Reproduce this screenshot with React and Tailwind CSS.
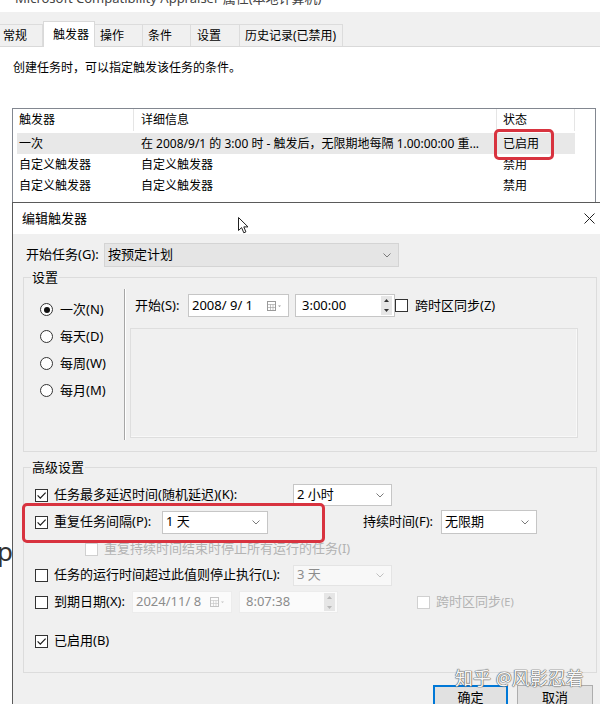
import React from "react";

const FONT = "font-['Noto_Sans','Noto_Sans_CJK_SC',sans-serif]";

const TABS = [
    { label: '常规', w: 'w-[43px]', pl: 'pl-[3px]' },
    { label: '触发器', w: 'w-[52px]', pl: 'pl-[9px]', active: true },
    { label: '操作', w: 'w-[48px]', pl: 'pl-[5px]' },
    { label: '条件', w: 'w-[48px]', pl: 'pl-[5px]' },
    { label: '设置', w: 'w-[49px]', pl: 'pl-[6px]' },
    { label: '历史记录(已禁用)', w: 'w-[103px]', pl: 'pl-[5px]' },
];

const ROWS = [
    { name: '一次', detail: '在 2008/9/1 的 3:00 时 - 触发后，无限期地每隔 1.00:00:00 重...', status: '已启用', selected: true },
    { name: '自定义触发器', detail: '自定义触发器', status: '禁用' },
    { name: '自定义触发器', detail: '自定义触发器', status: '禁用' },
];

function Check({ checked = false, disabled = false }) {
    return (
        <span className={`flex h-[13px] w-[13px] shrink-0 items-center justify-center border bg-white ${disabled ? 'border-[#d0d0d0]' : 'border-[#333333]'}`}>
            {checked && (
                <svg width="11" height="11" viewBox="0 0 11 11">
                    <path d="M1.6 5.4 L4.3 8.1 L9.6 2.6" fill="none" stroke="#1a1a1a" strokeWidth="1.2" />
                </svg>
            )}
        </span>
    );
}

function Radio({ checked = false }) {
    return (
        <span className="flex h-[13px] w-[13px] shrink-0 items-center justify-center rounded-full border border-[#333333] bg-white">
            {checked && <span className="h-[6px] w-[6px] rounded-full bg-[#111111]" />}
        </span>
    );
}

function Chevron({ color = '#7a7a7a' }) {
    return (
        <svg width="8" height="5" viewBox="0 0 8 5" className="shrink-0">
            <path d="M0.5 0.5 L4 4 L7.5 0.5" fill="none" stroke={color} strokeWidth="1" />
        </svg>
    );
}

function Select({ text, className = '', disabled = false, gray = false }) {
    const look = gray
        ? 'border-[#d4d4d4] bg-[#e5e5e5]'
        : disabled
            ? 'border-[#e4e4e4] bg-[#f8f8f8] text-[#8c8c8c]'
            : 'border-[#c6c6c6] bg-white';
    return (
        <div className={`flex shrink-0 items-center justify-between border pl-[3px] pr-[7px] ${look} ${className}`}>
            <span>{text}</span>
            <Chevron color={disabled ? '#c0c0c0' : '#7a7a7a'} />
        </div>
    );
}

function CalendarIcon({ disabled }) {
    const c = disabled ? '#c4c4c4' : '#9a9a9a';
    return (
        <svg width="15" height="10" viewBox="0 0 15 10" className="shrink-0">
            <rect x="0.5" y="0.5" width="8" height="9" fill="none" stroke={c} />
            <path d="M0.5 3.5 H8.5 M0.5 6.5 H8.5 M3.5 3.5 V9.5 M6 3.5 V9.5" stroke={c} strokeWidth="0.6" />
            <path d="M11 4.5 H14 L12.5 6 Z" fill={c} />
        </svg>
    );
}

function Spinner({ disabled }) {
    const c = disabled ? '#b8b8b8' : '#333333';
    return (
        <div className="flex h-full w-[11px] flex-col justify-center gap-[2px] bg-[#e6e6e6]">
            <div className="flex flex-1 items-center justify-center">
                <svg width="5" height="3" viewBox="0 0 5 3"><path d="M0 3 L2.5 0 L5 3 Z" fill={c} /></svg>
            </div>
            <div className="flex flex-1 items-center justify-center">
                <svg width="5" height="3" viewBox="0 0 5 3"><path d="M0 0 L2.5 3 L5 0 Z" fill={c} /></svg>
            </div>
        </div>
    );
}

function DateBox({ text, className = '', disabled = false }) {
    return (
        <div className={`flex shrink-0 items-center justify-between border pl-[3px] pr-[6px] ${disabled ? 'border-[#ececec] bg-[#fbfbfb] text-[#8c8c8c]' : 'border-[#c6c6c6] bg-white'} ${className}`}>
            <span>{text}</span>
            <CalendarIcon disabled={disabled} />
        </div>
    );
}

function TimeBox({ text, className = '', disabled = false }) {
    return (
        <div className={`flex shrink-0 items-center justify-between border py-[1px] pl-[6px] pr-[2px] ${disabled ? 'border-[#ececec] bg-[#fbfbfb] text-[#8c8c8c]' : 'border-[#c6c6c6] bg-white'} ${className}`}>
            <span>{text}</span>
            <Spinner disabled={disabled} />
        </div>
    );
}

function CheckRow({ checked, label, labelW, className = '', children }) {
    return (
        <div className={`flex items-center pl-[11px] ${className}`}>
            <Check checked={checked} />
            <span className={`ml-[6px] shrink-0 whitespace-nowrap ${labelW || ''}`}>{label}</span>
            {children}
        </div>
    );
}

export default function App() {
    return (
        <div className={`relative h-[704px] w-[600px] overflow-hidden bg-white text-black ${FONT}`}>
            {/* Properties window behind */}
            <div className="flex flex-col">
                <div className="h-[12px] overflow-hidden bg-white">
                    <div className="-mt-[10px] whitespace-nowrap pl-[15px] text-[13px] leading-[16px] text-[#444444]">
                        Microsoft Compatibility Appraiser 属性(本地计算机)
                    </div>
                </div>

                <div className="flex h-[35px] items-end border-b border-[#d9d9d9] bg-[#f0f0f0] text-[12px]">
                    {TABS.map((t) => (
                        <div
                            key={t.label}
                            className={`flex shrink-0 items-center whitespace-nowrap ${t.w} ${t.pl} ${t.active
                                ? '-mb-px h-[26px] border-x border-t border-[#d9d9d9] bg-white'
                                : 'h-[22px] border-t border-r border-[#dcdcdc]'
                                }`}
                        >
                            {t.label}
                        </div>
                    ))}
                </div>

                <div className="mt-[13px] pl-[13px] text-[12px] leading-[16px]">创建任务时，可以指定触发该任务的条件。</div>

                <div className="ml-[12px] mt-[32px] h-[95px] w-[584px] border border-[#828790] text-[12px]">
                    <div className="ml-[4px] flex h-[22px] items-center">
                        <div className="flex h-full w-[117px] items-center border-r border-[#e5e5e5] pl-[2px]">触发器</div>
                        <div className="flex h-full w-[363px] items-center border-r border-[#e5e5e5] pl-[7px]">详细信息</div>
                        <div className="flex h-full w-[78px] items-center border-r border-[#e5e5e5] pl-[6px]">状态</div>
                    </div>
                    <div className="mt-[2px] flex flex-col">
                        {ROWS.map((r, i) => (
                            <div key={i} className={`ml-[4px] flex h-[21px] w-[558px] items-center ${r.selected ? 'bg-[#e8e8e8]' : ''}`}>
                                <div className="w-[117px] pl-[2px]">{r.name}</div>
                                <div className="w-[363px] whitespace-nowrap pl-[7px]">{r.detail}</div>
                                <div className="w-[78px] pl-[6px]">{r.status}</div>
                            </div>
                        ))}
                    </div>
                </div>
            </div>

            {/* annotation on the list */}
            <div className="absolute left-[494px] top-[129px] h-[31px] w-[60px] rounded-[5px] border-[3px] border-[#d8333f]" />

            {/* fragment of text from the window behind */}
            <div className="absolute left-[-3px] top-[536px] text-[26px] leading-[30px] text-[#333333]">p</div>

            {/* Edit trigger dialog */}
            <div className="absolute left-[12px] top-[202px] flex h-[520px] w-[620px] flex-col border-l border-t border-[#5a5a5a] bg-[#f0f0f0] text-[13px]">
                <div className="flex h-[31px] shrink-0 items-center justify-between bg-white pl-[9px] pr-[37px]">
                    <span>编辑触发器</span>
                    <svg width="11" height="11" viewBox="0 0 11 11">
                        <path d="M0.5 0.5 L10.5 10.5 M10.5 0.5 L0.5 10.5" stroke="#222" strokeWidth="1" />
                    </svg>
                </div>

                <div className="flex flex-col pl-[10px]">
                    <div className="mt-[9px] flex h-[24px] items-center">
                        <span className="w-[81px] pl-[3px]">开始任务(G):</span>
                        <Select gray text="按预定计划" className="h-[24px] w-[295px]" />
                    </div>

                    {/* 设置 */}
                    <fieldset className="mt-[1px] w-[574px] border border-[#dcdcdc]">
                        <legend className="ml-[7px] px-[1px] leading-[18px]">设置</legend>
                        <div className="flex h-[165px]">
                            <div className="flex w-[100px] flex-col pl-[16px] pt-[10px]">
                                {[['一次(N)', true], ['每天(D)'], ['每周(W)'], ['每月(M)']].map(([label, on]) => (
                                    <div key={label} className="flex h-[27px] items-center gap-[7px]">
                                        <Radio checked={on} />
                                        <span>{label}</span>
                                    </div>
                                ))}
                            </div>
                            <div className="mt-[3px] h-[151px] w-[2px] border-l border-r border-l-[#a6a6a6] border-r-white" />
                            <div className="flex flex-col pl-[4px]">
                                <div className="mt-[8px] flex h-[23px] items-center">
                                    <span className="w-[58px] pl-[5px]">开始(S):</span>
                                    <DateBox text="2008/ 9/ 1" className="h-[23px] w-[101px]" />
                                    <TimeBox text="3:00:00" className="ml-[6px] h-[23px] w-[100px]" />
                                    <Check />
                                    <span className="ml-[7px] whitespace-nowrap">跨时区同步(Z)</span>
                                </div>
                                <div className="mt-[11px] h-[110px] w-[448px] border border-[#dedede] shadow-[inset_-1px_-1px_0_#f8f8f8]" />
                            </div>
                        </div>
                    </fieldset>

                    {/* 高级设置 */}
                    <fieldset className="mt-[6px] w-[574px] border border-[#dcdcdc]">
                        <legend className="ml-[7px] px-[1px] leading-[18px]">高级设置</legend>
                        <div className="flex h-[196px] flex-col pt-[6px]">
                            <CheckRow checked label="任务最多延迟时间(随机延迟)(K):" labelW="w-[239px]" className="h-[26px]">
                                <Select text="2 小时" className="h-[22px] w-[99px]" />
                            </CheckRow>
                            <CheckRow checked label="重复任务间隔(P):" labelW="w-[108px]" className="h-[28px]">
                                <Select text="1 天" className="h-[23px] w-[106px]" />
                                <span className="ml-[95px] w-[78px] shrink-0 whitespace-nowrap">持续时间(F):</span>
                                <Select text="无限期" className="h-[24px] w-[96px]" />
                            </CheckRow>
                            <div className="flex h-[26px] items-center pl-[61px]">
                                <Check disabled />
                                <span className="ml-[6px] whitespace-nowrap text-[#b3b3b3]">重复持续时间结束时停止所有运行的任务(I)</span>
                            </div>
                            <CheckRow label="任务的运行时间超过此值则停止执行(L):" labelW="w-[239px]" className="h-[26px]">
                                <Select disabled text="3 天" className="h-[21px] w-[99px]" />
                            </CheckRow>
                            <CheckRow label="到期日期(X):" labelW="w-[78px]" className="h-[28px]">
                                <DateBox disabled text="2024/11/ 8" className="h-[22px] w-[100px]" />
                                <TimeBox disabled text="8:07:38" className="ml-[7px] h-[22px] w-[99px]" />
                                <span className="ml-[79px] flex items-center">
                                    <Check disabled />
                                    <span className="ml-[6px] whitespace-nowrap text-[#b3b3b3]">
                                        跨时区同步<span className="text-[11px]">(E)</span>
                                    </span>
                                </span>
                            </CheckRow>
                            <CheckRow checked label="已启用(B)" className="mt-[12px] h-[26px]" />
                        </div>
                    </fieldset>

                    <div className="ml-[410px] mt-[12px] flex gap-[9px]">
                        <button className="flex h-[25px] w-[75px] items-center justify-center border-2 border-[#0078d7] bg-[#e1e1e1]">确定</button>
                        <button className="flex h-[25px] w-[76px] items-center justify-center border border-[#adadad] bg-[#e1e1e1]">取消</button>
                    </div>
                </div>
            </div>

            {/* annotation on the repeat row */}
            <div className="absolute left-[22px] top-[503px] h-[40px] w-[303px] rounded-[5px] border-[3px] border-[#d8333f]" />

            {/* mouse pointer */}
            <svg className="absolute left-[238px] top-[217px]" width="11" height="17" viewBox="0 0 11 17">
                <path d="M0.5 0.5 L0.5 13.5 L3.6 10.6 L5.8 15.8 L7.9 14.9 L5.8 9.9 L10 9.9 Z" fill="white" stroke="#222" strokeWidth="1" strokeLinejoin="round" />
            </svg>

            {/* watermark */}
            <div className="absolute left-[455px] top-[667px] whitespace-nowrap text-[18px] leading-[22px] text-[#f7f7f7] [text-shadow:0_0_1px_#555,0_0_1px_#555,0_0_1px_#555]">
                知乎 @风影忍着
            </div>
        </div>
    );
}
